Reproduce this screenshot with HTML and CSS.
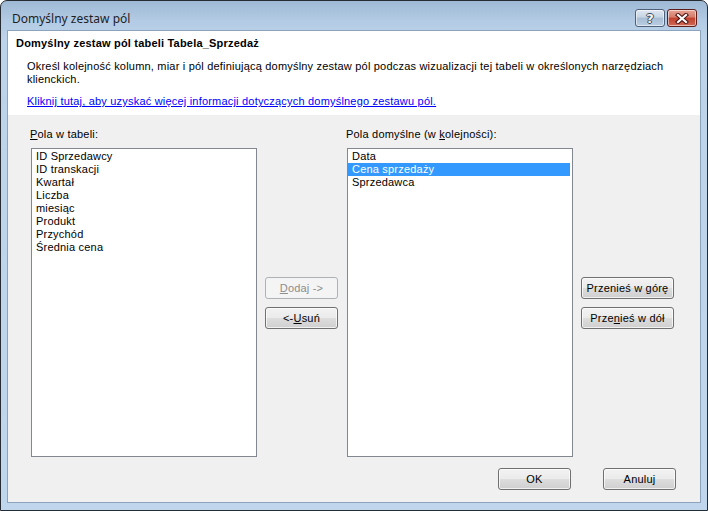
FILE: index.html
```html
<!DOCTYPE html>
<html lang="pl">
<head>
    <meta charset="UTF-8">
    <title>Domyślny zestaw pól</title>
    <link rel="stylesheet" href="styles.css">
</head>
<body>

<div class="window">
    <div class="titlebar">
        <span class="title">Domyślny zestaw pól</span>
        <div class="caption-btns">
            <span class="cap-btn cap-help">?</span>
            <span class="cap-btn cap-close">
                <svg width="14" height="11" viewBox="0 0 14 11">
                    <path d="M3 2 L11 9 M11 2 L3 9" stroke="#4a1010" stroke-width="4.2" stroke-linecap="square" fill="none"/>
                    <path d="M3 2 L11 9 M11 2 L3 9" stroke="#ffffff" stroke-width="2.2" stroke-linecap="square" fill="none"/>
                </svg>
            </span>
        </div>
    </div>

    <div class="client">
        <div class="header">
            <div class="header-title">Domyślny zestaw pól tabeli Tabela_Sprzedaż</div>
            <p class="header-desc">Określ kolejność kolumn, miar i pól definiującą domyślny zestaw pól podczas wizualizacji tej tabeli w określonych narzędziach klienckich.</p>
            <a class="header-link" href="#">Kliknij tutaj, aby uzyskać więcej informacji dotyczących domyślnego zestawu pól.</a>
        </div>

        <div class="fields">
            <label class="field-label col-left"><u>P</u>ola w tabeli:</label>
            <label class="field-label col-right">Pola domyślne (w <u>k</u>olejności):</label>

            <div class="listbox">
                <div class="list-item">ID Sprzedawcy</div>
                <div class="list-item">ID transkacji</div>
                <div class="list-item">Kwartał</div>
                <div class="list-item">Liczba</div>
                <div class="list-item">miesiąc</div>
                <div class="list-item">Produkt</div>
                <div class="list-item">Przychód</div>
                <div class="list-item">Średnia cena</div>
            </div>

            <div class="move-buttons">
                <button class="btn" disabled><u>D</u>odaj -&gt;</button>
                <button class="btn">&lt;-<u>U</u>suń</button>
            </div>

            <div class="listbox">
                <div class="list-item">Data</div>
                <div class="list-item selected">Cena sprzedaży</div>
                <div class="list-item">Sprzedawca</div>
            </div>

            <div class="move-buttons">
                <button class="btn btn-wide">Przenieś w <u>g</u>órę</button>
                <button class="btn btn-wide">Prze<u>n</u>ieś w dół</button>
            </div>
        </div>

        <div class="footer">
            <button class="btn">OK</button>
            <button class="btn">Anuluj</button>
        </div>
    </div>
</div>

</body>
</html>
```

FILE: styles.css
```css
html, body {
    margin: 0;
    padding: 0;
    background: #ffffff;
}
body {
    width: 708px;
    height: 511px;
    overflow: hidden;
    font-family: "Liberation Sans", Arial, sans-serif;
    font-size: 11px;
    letter-spacing: 0.2px;
    color: #000;
}
.window {
    box-sizing: border-box;
    width: 708px;
    height: 511px;
    display: flex;
    flex-direction: column;
    padding: 0 6px 7px;
    border: 1px solid #262c33;
    border-radius: 7px 7px 0 0;
    background: linear-gradient(#9fb9d5 0px, #b3cbe4 20px, #bcd3ea 40px, #c0d6ec 100%);
}
.titlebar {
    height: 24px;
    padding: 5px 4px 0 5px;
    display: flex;
    align-items: center;
    justify-content: space-between;
}
.title {
    font-family: "Noto Sans", "Open Sans", sans-serif;
    font-size: 12px;
    letter-spacing: 0;
    color: #1e1e1e;
    margin-top: 1px;
}
.caption-btns {
    display: flex;
    gap: 2px;
}
.cap-btn {
    box-sizing: border-box;
    width: 30px;
    height: 18px;
    border: 1px solid #4f6178;
    border-radius: 3px;
    display: flex;
    align-items: center;
    justify-content: center;
    box-shadow: inset 0 0 0 1px rgba(255, 255, 255, 0.55);
}
.cap-help {
    background: linear-gradient(#dfe7f1 0%, #c6d4e4 45%, #a8bdd5 50%, #b9cde2 100%);
    font-family: "DejaVu Sans", sans-serif;
    font-weight: bold;
    font-size: 13px;
    line-height: 1;
    color: #f4f6f9;
    text-shadow: 1px 0 0 #3d4a5a, -1px 0 0 #3d4a5a, 0 1px 0 #3d4a5a, 0 -1px 0 #3d4a5a;
}
.cap-close {
    border-color: #5e1f1a;
    background: linear-gradient(#e6a394 0%, #d67b6a 45%, #c1402c 50%, #cf6a55 100%);
}

.client {
    flex: 1;
    display: flex;
    flex-direction: column;
    border: 1px solid #8da3bc;
    background: #f0f0f0;
}
.header {
    height: 84px;
    box-sizing: border-box;
    padding: 6px 8px 0;
    background: #ffffff;
}
.header-title {
    font-weight: bold;
    line-height: 13px;
}
.header-desc {
    margin: 10px 0 0 11px;
    width: 662px;
    line-height: 13px;
}
.header-link {
    display: inline-block;
    margin: 9px 0 0 11px;
    line-height: 13px;
    color: #0000ff;
}

.fields {
    display: grid;
    grid-template-columns: 226px 74px 226px 93px;
    grid-template-rows: 13px 309px;
    column-gap: 8px;
    row-gap: 7px;
    padding: 13px 0 0 23px;
}
.field-label {
    grid-row: 1;
    line-height: 13px;
    margin-left: -1px;
}
.col-left {
    grid-column: 1;
}
.col-right {
    grid-column: 3;
}
.listbox {
    grid-row: 2;
    box-sizing: border-box;
    border: 1px solid #828790;
    background: #ffffff;
    padding: 1px 2px 1px 0;
}
.list-item {
    height: 13px;
    line-height: 13px;
    padding-left: 4px;
    white-space: nowrap;
}
.list-item.selected {
    background: #3399ff;
    color: #ffffff;
}
.move-buttons {
    grid-row: 2;
    display: flex;
    flex-direction: column;
    justify-content: center;
    gap: 8px;
}

.btn {
    box-sizing: border-box;
    width: 73px;
    height: 22px;
    padding: 0;
    font-family: "Liberation Sans", Arial, sans-serif;
    font-size: 11px;
    letter-spacing: 0.2px;
    color: #000;
    border: 1px solid #707070;
    border-radius: 3px;
    background: linear-gradient(#f2f2f2 0%, #ebebeb 48%, #dddddd 52%, #cfcfcf 100%);
    box-shadow: inset 0 0 0 1px rgba(255, 255, 255, 0.7);
}
.btn-wide {
    width: 93px;
}
.btn:disabled {
    color: #8d8d8d;
    border-color: #adb2b5;
    background: #f4f4f4;
    box-shadow: none;
}

.footer {
    display: flex;
    justify-content: flex-end;
    gap: 32px;
    padding: 11px 24px 0 0;
}
```
